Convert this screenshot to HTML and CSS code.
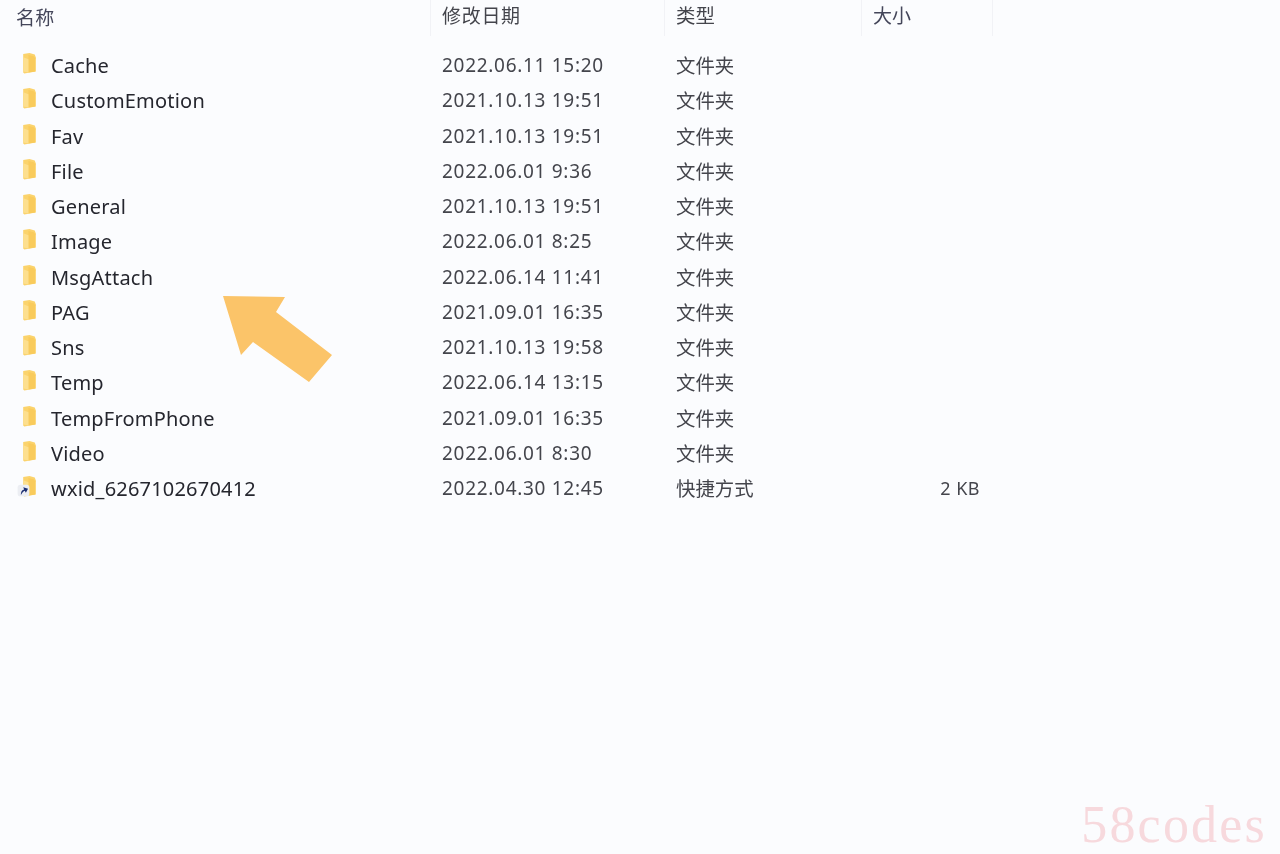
FILE: index.html
```html
<!DOCTYPE html>
<html lang="zh-CN">
<head>
    <meta charset="UTF-8">
    <meta name="viewport" content="width=device-width, initial-scale=1.0">
    <title>文件夹</title>
    <link rel="stylesheet" href="styles.css">
</head>
<body>
    <svg class="defs" width="0" height="0">
        <symbol id="folder" viewBox="0 0 16 20">
            <path d="M2 1 L8 0 L13 1.5 L14 4 V17.5 L3 19.5 L2 18.5 Z" fill="#fbd36c"/>
            <path d="M7 2 L12 3 L13.5 5 V17.5 L7 18.5 Z" fill="#f9cb5c"/>
            <path d="M2 4 L7 6 V18.5 L2 17.5 Z" fill="#fddf8e"/>
        </symbol>
    </svg>
    <div class="explorer">
        <div class="head">
            <div class="head-cell col-name">名称</div>
            <div class="head-cell col-date">修改日期</div>
            <div class="head-cell col-type">类型</div>
            <div class="head-cell col-head-size">大小</div>
        </div>
        <div class="rows">
            <div class="row"><div class="col-name"><svg class="icon"><use href="#folder"/></svg>Cache</div><div class="col-date">2022.06.11 15:20</div><div class="col-type">文件夹</div><div class="col-size"></div></div>
            <div class="row"><div class="col-name"><svg class="icon"><use href="#folder"/></svg>CustomEmotion</div><div class="col-date">2021.10.13 19:51</div><div class="col-type">文件夹</div><div class="col-size"></div></div>
            <div class="row"><div class="col-name"><svg class="icon"><use href="#folder"/></svg>Fav</div><div class="col-date">2021.10.13 19:51</div><div class="col-type">文件夹</div><div class="col-size"></div></div>
            <div class="row"><div class="col-name"><svg class="icon"><use href="#folder"/></svg>File</div><div class="col-date">2022.06.01 9:36</div><div class="col-type">文件夹</div><div class="col-size"></div></div>
            <div class="row"><div class="col-name"><svg class="icon"><use href="#folder"/></svg>General</div><div class="col-date">2021.10.13 19:51</div><div class="col-type">文件夹</div><div class="col-size"></div></div>
            <div class="row"><div class="col-name"><svg class="icon"><use href="#folder"/></svg>Image</div><div class="col-date">2022.06.01 8:25</div><div class="col-type">文件夹</div><div class="col-size"></div></div>
            <div class="row"><div class="col-name"><svg class="icon"><use href="#folder"/></svg>MsgAttach</div><div class="col-date">2022.06.14 11:41</div><div class="col-type">文件夹</div><div class="col-size"></div></div>
            <div class="row"><div class="col-name"><svg class="icon"><use href="#folder"/></svg>PAG</div><div class="col-date">2021.09.01 16:35</div><div class="col-type">文件夹</div><div class="col-size"></div></div>
            <div class="row"><div class="col-name"><svg class="icon"><use href="#folder"/></svg>Sns</div><div class="col-date">2021.10.13 19:58</div><div class="col-type">文件夹</div><div class="col-size"></div></div>
            <div class="row"><div class="col-name"><svg class="icon"><use href="#folder"/></svg>Temp</div><div class="col-date">2022.06.14 13:15</div><div class="col-type">文件夹</div><div class="col-size"></div></div>
            <div class="row"><div class="col-name"><svg class="icon"><use href="#folder"/></svg>TempFromPhone</div><div class="col-date">2021.09.01 16:35</div><div class="col-type">文件夹</div><div class="col-size"></div></div>
            <div class="row"><div class="col-name"><svg class="icon"><use href="#folder"/></svg>Video</div><div class="col-date">2022.06.01 8:30</div><div class="col-type">文件夹</div><div class="col-size"></div></div>
            <div class="row">
                <div class="col-name">
                    <span class="shortcut">
                        <svg class="icon"><use href="#folder"/></svg>
                        <svg class="badge" viewBox="0 0 10 10">
                            <rect x="0.5" y="0.5" width="9" height="9" rx="2" fill="#eceef3"/>
                            <path d="M3 8.5 C3 5.5 4 4.5 5.5 4.2 L4.8 2.5 L8.5 3.6 L6.8 6.8 L6 5.2 C5 5.5 4.2 6.4 3 8.5 Z" fill="#1c2f72"/>
                        </svg>
                    </span>wxid_6267102670412
                </div>
                <div class="col-date">2022.04.30 12:45</div>
                <div class="col-type">快捷方式</div>
                <div class="col-size">2 KB</div>
            </div>
        </div>
    </div>
    <svg class="arrow" width="120" height="100" viewBox="0 0 120 100">
        <polygon points="3,6 65,7 56,22 112,65 89,92 33,52 21,65" fill="#fbc469"/>
    </svg>
    <div class="watermark">58codes</div>
</body>
</html>
```

FILE: styles.css
```css
body {
    margin: 0;
    height: 854px;
    overflow: hidden;
    position: relative;
    background-color: #fbfcfe;
    color: #25262e;
    font-family: "Noto Sans", "Noto Sans CJK SC", sans-serif;
    font-size: 20px;
}
.defs { position: absolute; }
.explorer { width: 993px; filter: blur(0.4px); }
.head {
    display: grid;
    grid-template-columns: 431px 234px 197px 131px;
    height: 36px;
}
.head-cell {
    padding-left: 11px;
    font-size: 19px;
    line-height: 32px;
    letter-spacing: 0;
    color: #44465a;
    border-right: 1px solid #f1f2f6;
}
.head-cell.col-name { padding-left: 16px; }
.rows { padding-top: 12px; }
.row {
    display: grid;
    grid-template-columns: 431px 234px 197px 131px;
    height: 35.25px;
    line-height: 35px;
    align-items: center;
}
.col-name {
    display: flex;
    align-items: center;
    padding-left: 21px;
    letter-spacing: 0.2px;
}
.icon {
    width: 17px;
    height: 21px;
    margin-right: 13px;
    margin-top: -4px;
    flex: none;
}
.col-date {
    padding-left: 11px;
    font-size: 19px;
    letter-spacing: 0.7px;
    color: #44454c;
}
.col-type {
    padding-left: 11px;
    font-size: 19.4px;
    color: #44454c;
}
.col-size {
    padding-right: 13px;
    font-size: 18px;
    text-align: right;
    letter-spacing: 0.5px;
    color: #44454c;
}
.shortcut { position: relative; display: flex; }
.badge {
    position: absolute;
    left: -4px;
    bottom: 0;
    width: 13px;
    height: 13px;
}
.arrow {
    position: absolute;
    left: 220px;
    top: 290px;
}
.watermark {
    position: absolute;
    right: 13px;
    bottom: 1px;
    font-family: "Liberation Serif", serif;
    font-size: 52px;
    line-height: 56px;
    letter-spacing: 2.2px;
    color: #f7d9dd;
}
```
